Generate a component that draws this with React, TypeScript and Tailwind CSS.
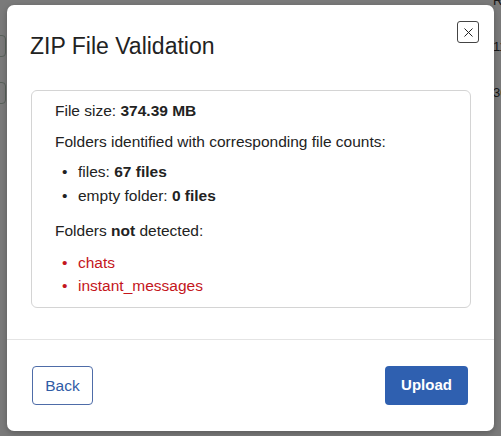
import { X } from "lucide-react";

const font = { fontFamily: '"Liberation Sans", Arial, sans-serif' };

function Backdrop() {
  return (
    <div className="flex h-[436px] w-[501px] justify-between bg-white">
      <div className="flex flex-col gap-[25px] pt-[35px]">
        <div className="ml-[-40px] h-[22px] w-[46px] rounded-[4px] border border-[#b9cbbd]" />
        <div className="ml-[-40px] h-[22px] w-[46px] rounded-[4px] border border-[#b9cbbd]" />
      </div>
      <div className="flex w-[8px] flex-col overflow-hidden text-[13px] leading-[14px] text-[#333]">
        <span className="mt-[-6px]">R</span>
        <span className="mt-[32px]">11</span>
        <span className="mt-[32px]">30</span>
      </div>
    </div>
  );
}

export default function App() {
  return (
    <div className="relative h-[436px] w-[501px] overflow-hidden" style={font}>
      <Backdrop />
      <div className="absolute inset-0 bg-[rgba(0,0,0,0.52)] pl-[7px] pt-[5px]">
        <div className="flex h-[426px] w-[487px] flex-col rounded-[7px] bg-white text-[#222] shadow-[0_2px_6px_rgba(0,0,0,0.25)]">
          <div className="flex h-[85px] items-start justify-between pl-[23px] pr-[15px] pt-[16px]">
            <h1 className="mt-[11px] text-[23px] leading-[28px] text-[#222]">ZIP File Validation</h1>
            <button className="flex h-[22px] w-[22px] items-center justify-center rounded-[3px] border border-[#444] text-[#222]">
              <X size={15} strokeWidth={1.6} />
            </button>
          </div>

          <div className="flex-1 px-[24px]">
            <div className="w-[440px] rounded-[6px] border border-[#d4d4d4] px-[23px] pb-[9px] pt-[8px] text-[15.5px] leading-[23.5px]">
              <p className="mb-[7px]">
                File size: <b>374.39 MB</b>
              </p>
              <p className="mb-[7px]">Folders identified with corresponding file counts:</p>
              <ul className="mb-[12px] pl-[7px]">
                <li className="flex">
                  <span className="w-[16px]">•</span>
                  <span>
                    files: <b>67 files</b>
                  </span>
                </li>
                <li className="flex">
                  <span className="w-[16px]">•</span>
                  <span>
                    empty folder: <b>0 files</b>
                  </span>
                </li>
              </ul>
              <p className="mb-[8px]">
                Folders <b>not</b> detected:
              </p>
              <ul className="pl-[7px] text-[#c4161c]">
                <li className="flex">
                  <span className="w-[16px]">•</span>
                  <span>chats</span>
                </li>
                <li className="flex">
                  <span className="w-[16px]">•</span>
                  <span>instant_messages</span>
                </li>
              </ul>
            </div>
          </div>

          <div className="flex h-[92px] items-center justify-between border-t border-[#e4e4e4] pl-[25px] pr-[26px]">
            <button className="h-[39px] w-[61px] rounded-[4px] border border-[#4e6ca8] text-[15.5px] text-[#2f5ca6]">
              Back
            </button>
            <button className="h-[39px] w-[83px] rounded-[4px] bg-[#2f60b0] text-[15px] font-bold text-white">
              Upload
            </button>
          </div>
        </div>
      </div>
    </div>
  );
}
